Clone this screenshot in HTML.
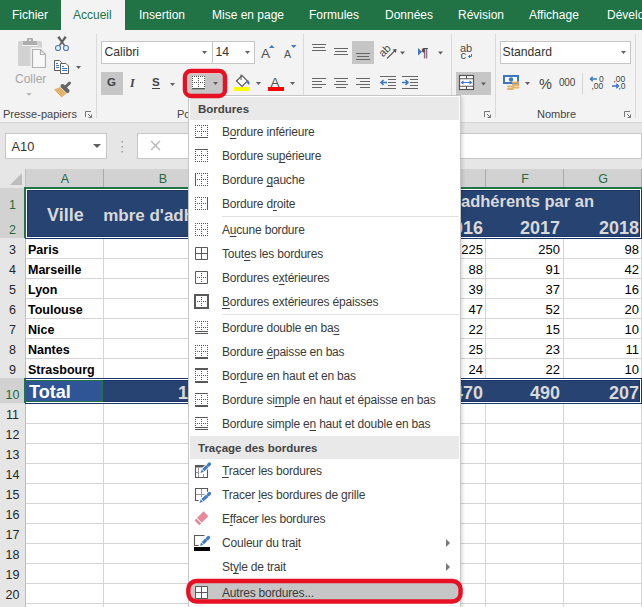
<!DOCTYPE html><html><head><meta charset="utf-8"><style>
*{margin:0;padding:0;box-sizing:border-box}
html,body{width:642px;height:607px;overflow:hidden;background:#fff}
body{position:relative;font-family:"Liberation Sans",sans-serif;color:#262626}
.a{position:absolute}
.t{position:absolute;white-space:nowrap;line-height:1}
.tab{position:absolute;top:8px;font-size:12px;color:#fff;white-space:nowrap;line-height:14px}
.sep{position:absolute;width:1px;background:#dadada}
.gl{position:absolute;font-size:11px;color:#444;white-space:nowrap;line-height:12px}
.dd{position:absolute;width:0;height:0;border-left:3px solid transparent;border-right:3px solid transparent;border-top:3px solid #5f5f5f}
.box{position:absolute;background:#fff;border:1px solid #c6c6c6}
.hl{position:absolute;height:1px;background:#d4d4d4}
.vl{position:absolute;width:1px;background:#d4d4d4}
.rh{position:absolute;left:0;width:25px;background:#e6e6e6;font-size:12.5px;color:#262626;text-align:center;white-space:nowrap}
.cell{position:absolute;font-size:12.5px;font-weight:bold;color:#000;white-space:nowrap;line-height:20px}
.num{position:absolute;font-size:13px;color:#000;white-space:nowrap;line-height:20px;text-align:right}
.mh{position:absolute;left:1px;width:269px;height:23px;background:#e9e9e9;font-size:11.5px;font-weight:bold;color:#444;line-height:25px;padding-left:8px;white-space:nowrap}
.mi{position:absolute;left:33px;font-size:12px;letter-spacing:-0.2px;color:#3b3b3b;line-height:24px;white-space:nowrap}
.mi u{text-decoration:underline;text-underline-offset:1.5px}
.ms{position:absolute;left:33px;width:237px;height:1px;background:#e1e1e1}
.ic{position:absolute;left:6px}
</style></head><body>
<div class="a" style="left:0;top:0;width:642px;height:30px;background:#217346"></div>
<div class="a" style="left:61px;top:0;width:64px;height:30px;background:#f3f3f3"></div>
<div class="tab" style="left:12px;color:#fff">Fichier</div>
<div class="tab" style="left:73px;color:#217346">Accueil</div>
<div class="tab" style="left:139px;color:#fff">Insertion</div>
<div class="tab" style="left:212px;color:#fff">Mise en page</div>
<div class="tab" style="left:309px;color:#fff">Formules</div>
<div class="tab" style="left:385px;color:#fff">Données</div>
<div class="tab" style="left:458px;color:#fff">Révision</div>
<div class="tab" style="left:529px;color:#fff">Affichage</div>
<div class="tab" style="left:607px;color:#fff">Développeur</div>
<div class="a" style="left:0;top:30px;width:642px;height:92px;background:#f3f3f3"></div>
<div class="a" style="left:0;top:122px;width:642px;height:47px;background:#e6e6e6"></div>
<div class="box" style="left:5px;top:133px;width:102px;height:26px"></div>
<div class="t" style="left:11.5px;top:140.5px;font-size:12.8px;color:#333">A10</div>
<div class="dd" style="left:93px;top:143.5px;border-left-width:4px;border-right-width:4px;border-top-width:4.5px"></div>
<div class="box" style="left:137px;top:133px;width:505px;height:26px"></div>
<div class="a" style="left:0;top:122px;width:642px;height:1px;background:#d5d5d5"></div>
<div class="a" style="left:0;top:169px;width:25px;height:19px;background:#e6e6e6"></div>
<div class="a" style="left:25px;top:169px;width:617px;height:19px;background:#d2d2d2"></div>
<div class="a" style="left:25px;top:169px;width:1px;height:18px;background:#bdbdbd"></div>
<div class="a" style="left:103px;top:169px;width:1px;height:18px;background:#ababab"></div>
<div class="a" style="left:485px;top:169px;width:1px;height:18px;background:#ababab"></div>
<div class="a" style="left:563px;top:169px;width:1px;height:18px;background:#ababab"></div>
<div class="a" style="left:641px;top:169px;width:1px;height:18px;background:#ababab"></div>
<div class="t" style="left:45px;width:40px;text-align:center;top:173px;font-size:12.5px;color:#1e6b40">A</div>
<div class="t" style="left:143px;width:40px;text-align:center;top:173px;font-size:12.5px;color:#1e6b40">B</div>
<div class="t" style="left:505px;width:40px;text-align:center;top:173px;font-size:12.5px;color:#1e6b40">F</div>
<div class="t" style="left:583px;width:40px;text-align:center;top:173px;font-size:12.5px;color:#1e6b40">G</div>
<div class="rh" style="top:188px;height:25px;background:#d2d2d2"></div>
<div class="a" style="left:0;top:213px;width:25px;height:1px;background:#bdbdbd"></div>
<div class="t" style="left:0;width:25px;text-align:center;top:199px;font-size:12.5px;color:#1e6b40">1</div>
<div class="rh" style="top:213px;height:25px;background:#d2d2d2"></div>
<div class="a" style="left:0;top:238px;width:25px;height:1px;background:#bdbdbd"></div>
<div class="t" style="left:0;width:25px;text-align:center;top:224px;font-size:12.5px;color:#1e6b40">2</div>
<div class="rh" style="top:238px;height:20px;background:#e6e6e6"></div>
<div class="a" style="left:0;top:258px;width:25px;height:1px;background:#bdbdbd"></div>
<div class="t" style="left:0;width:25px;text-align:center;top:244px;font-size:12.5px;color:#262626">3</div>
<div class="rh" style="top:258px;height:20px;background:#e6e6e6"></div>
<div class="a" style="left:0;top:278px;width:25px;height:1px;background:#bdbdbd"></div>
<div class="t" style="left:0;width:25px;text-align:center;top:264px;font-size:12.5px;color:#262626">4</div>
<div class="rh" style="top:278px;height:20px;background:#e6e6e6"></div>
<div class="a" style="left:0;top:298px;width:25px;height:1px;background:#bdbdbd"></div>
<div class="t" style="left:0;width:25px;text-align:center;top:284px;font-size:12.5px;color:#262626">5</div>
<div class="rh" style="top:298px;height:20px;background:#e6e6e6"></div>
<div class="a" style="left:0;top:318px;width:25px;height:1px;background:#bdbdbd"></div>
<div class="t" style="left:0;width:25px;text-align:center;top:304px;font-size:12.5px;color:#262626">6</div>
<div class="rh" style="top:318px;height:20px;background:#e6e6e6"></div>
<div class="a" style="left:0;top:338px;width:25px;height:1px;background:#bdbdbd"></div>
<div class="t" style="left:0;width:25px;text-align:center;top:324px;font-size:12.5px;color:#262626">7</div>
<div class="rh" style="top:338px;height:20px;background:#e6e6e6"></div>
<div class="a" style="left:0;top:358px;width:25px;height:1px;background:#bdbdbd"></div>
<div class="t" style="left:0;width:25px;text-align:center;top:344px;font-size:12.5px;color:#262626">8</div>
<div class="rh" style="top:358px;height:20px;background:#e6e6e6"></div>
<div class="a" style="left:0;top:378px;width:25px;height:1px;background:#bdbdbd"></div>
<div class="t" style="left:0;width:25px;text-align:center;top:364px;font-size:12.5px;color:#262626">9</div>
<div class="rh" style="top:378px;height:25px;background:#d2d2d2"></div>
<div class="a" style="left:0;top:403px;width:25px;height:1px;background:#bdbdbd"></div>
<div class="t" style="left:0;width:25px;text-align:center;top:389px;font-size:12.5px;color:#1e6b40">10</div>
<div class="rh" style="top:403px;height:20px;background:#e6e6e6"></div>
<div class="a" style="left:0;top:423px;width:25px;height:1px;background:#bdbdbd"></div>
<div class="t" style="left:0;width:25px;text-align:center;top:409px;font-size:12.5px;color:#262626">11</div>
<div class="rh" style="top:423px;height:20px;background:#e6e6e6"></div>
<div class="a" style="left:0;top:443px;width:25px;height:1px;background:#bdbdbd"></div>
<div class="t" style="left:0;width:25px;text-align:center;top:429px;font-size:12.5px;color:#262626">12</div>
<div class="rh" style="top:443px;height:20px;background:#e6e6e6"></div>
<div class="a" style="left:0;top:463px;width:25px;height:1px;background:#bdbdbd"></div>
<div class="t" style="left:0;width:25px;text-align:center;top:449px;font-size:12.5px;color:#262626">13</div>
<div class="rh" style="top:463px;height:20px;background:#e6e6e6"></div>
<div class="a" style="left:0;top:483px;width:25px;height:1px;background:#bdbdbd"></div>
<div class="t" style="left:0;width:25px;text-align:center;top:469px;font-size:12.5px;color:#262626">14</div>
<div class="rh" style="top:483px;height:20px;background:#e6e6e6"></div>
<div class="a" style="left:0;top:503px;width:25px;height:1px;background:#bdbdbd"></div>
<div class="t" style="left:0;width:25px;text-align:center;top:489px;font-size:12.5px;color:#262626">15</div>
<div class="rh" style="top:503px;height:20px;background:#e6e6e6"></div>
<div class="a" style="left:0;top:523px;width:25px;height:1px;background:#bdbdbd"></div>
<div class="t" style="left:0;width:25px;text-align:center;top:509px;font-size:12.5px;color:#262626">16</div>
<div class="rh" style="top:523px;height:20px;background:#e6e6e6"></div>
<div class="a" style="left:0;top:543px;width:25px;height:1px;background:#bdbdbd"></div>
<div class="t" style="left:0;width:25px;text-align:center;top:529px;font-size:12.5px;color:#262626">17</div>
<div class="rh" style="top:543px;height:20px;background:#e6e6e6"></div>
<div class="a" style="left:0;top:563px;width:25px;height:1px;background:#bdbdbd"></div>
<div class="t" style="left:0;width:25px;text-align:center;top:549px;font-size:12.5px;color:#262626">18</div>
<div class="rh" style="top:563px;height:20px;background:#e6e6e6"></div>
<div class="a" style="left:0;top:583px;width:25px;height:1px;background:#bdbdbd"></div>
<div class="t" style="left:0;width:25px;text-align:center;top:569px;font-size:12.5px;color:#262626">19</div>
<div class="rh" style="top:583px;height:20px;background:#e6e6e6"></div>
<div class="a" style="left:0;top:603px;width:25px;height:1px;background:#bdbdbd"></div>
<div class="t" style="left:0;width:25px;text-align:center;top:589px;font-size:12.5px;color:#262626">20</div>
<div class="rh" style="top:603px;height:20px;background:#e6e6e6"></div>
<div class="a" style="left:0;top:623px;width:25px;height:1px;background:#bdbdbd"></div>
<div class="t" style="left:0;width:25px;text-align:center;top:609px;font-size:12.5px;color:#262626">21</div>
<div class="a" style="left:25px;top:188px;width:1px;height:419px;background:#bdbdbd"></div>
<svg class="a" style="left:0;top:169px" width="25" height="19"><polygon points="10,16 22,16 22,4" fill="#bdbdbd"/></svg>
<div class="hl" style="left:26px;top:213px;width:616px"></div>
<div class="hl" style="left:26px;top:238px;width:616px"></div>
<div class="hl" style="left:26px;top:258px;width:616px"></div>
<div class="hl" style="left:26px;top:278px;width:616px"></div>
<div class="hl" style="left:26px;top:298px;width:616px"></div>
<div class="hl" style="left:26px;top:318px;width:616px"></div>
<div class="hl" style="left:26px;top:338px;width:616px"></div>
<div class="hl" style="left:26px;top:358px;width:616px"></div>
<div class="hl" style="left:26px;top:378px;width:616px"></div>
<div class="hl" style="left:26px;top:403px;width:616px"></div>
<div class="hl" style="left:26px;top:423px;width:616px"></div>
<div class="hl" style="left:26px;top:443px;width:616px"></div>
<div class="hl" style="left:26px;top:463px;width:616px"></div>
<div class="hl" style="left:26px;top:483px;width:616px"></div>
<div class="hl" style="left:26px;top:503px;width:616px"></div>
<div class="hl" style="left:26px;top:523px;width:616px"></div>
<div class="hl" style="left:26px;top:543px;width:616px"></div>
<div class="hl" style="left:26px;top:563px;width:616px"></div>
<div class="hl" style="left:26px;top:583px;width:616px"></div>
<div class="hl" style="left:26px;top:603px;width:616px"></div>
<div class="hl" style="left:26px;top:623px;width:616px"></div>
<div class="vl" style="left:103px;top:188px;height:419px"></div>
<div class="vl" style="left:485px;top:188px;height:419px"></div>
<div class="vl" style="left:563px;top:188px;height:419px"></div>
<div class="vl" style="left:641px;top:188px;height:419px"></div>
<div class="a" style="left:25px;top:188px;width:617px;height:51px;background:#1c3468"></div>
<div class="a" style="left:26px;top:189px;width:615px;height:49px;background:#fff"></div>
<div class="a" style="left:27px;top:190px;width:613px;height:47px;background:#1c3468"></div>
<div class="a" style="left:28px;top:191px;width:611px;height:45px;background:#264372"></div>
<div class="t" style="left:47px;top:206px;font-size:18px;font-weight:bold;color:#d9d9d9">Ville</div>
<div class="a" style="left:103px;top:190px;width:85px;height:46px;overflow:hidden"><div class="t" style="left:-22.5px;top:16.5px;font-size:17px;font-weight:bold;color:#d9d9d9">Nombre d'adhérents</div></div>
<div class="t" style="left:461px;top:193px;font-size:16.5px;font-weight:bold;color:#d9d9d9">adhérents par an</div>
<div class="t" style="left:423px;width:60px;text-align:right;top:219px;font-size:18px;font-weight:bold;color:#d9d9d9">2016</div>
<div class="t" style="left:500px;width:60px;text-align:right;top:219px;font-size:18px;font-weight:bold;color:#d9d9d9">2017</div>
<div class="t" style="left:579px;width:60px;text-align:right;top:219px;font-size:18px;font-weight:bold;color:#d9d9d9">2018</div>
<div class="cell" style="left:28px;top:240px">Paris</div>
<div class="num" style="left:423px;width:60px;top:240px">225</div>
<div class="num" style="left:500px;width:60px;top:240px">250</div>
<div class="num" style="left:579px;width:60px;top:240px">98</div>
<div class="cell" style="left:28px;top:260px">Marseille</div>
<div class="num" style="left:423px;width:60px;top:260px">88</div>
<div class="num" style="left:500px;width:60px;top:260px">91</div>
<div class="num" style="left:579px;width:60px;top:260px">42</div>
<div class="cell" style="left:28px;top:280px">Lyon</div>
<div class="num" style="left:423px;width:60px;top:280px">39</div>
<div class="num" style="left:500px;width:60px;top:280px">37</div>
<div class="num" style="left:579px;width:60px;top:280px">16</div>
<div class="cell" style="left:28px;top:300px">Toulouse</div>
<div class="num" style="left:423px;width:60px;top:300px">47</div>
<div class="num" style="left:500px;width:60px;top:300px">52</div>
<div class="num" style="left:579px;width:60px;top:300px">20</div>
<div class="cell" style="left:28px;top:320px">Nice</div>
<div class="num" style="left:423px;width:60px;top:320px">22</div>
<div class="num" style="left:500px;width:60px;top:320px">15</div>
<div class="num" style="left:579px;width:60px;top:320px">10</div>
<div class="cell" style="left:28px;top:340px">Nantes</div>
<div class="num" style="left:423px;width:60px;top:340px">25</div>
<div class="num" style="left:500px;width:60px;top:340px">23</div>
<div class="num" style="left:579px;width:60px;top:340px">11</div>
<div class="cell" style="left:28px;top:360px">Strasbourg</div>
<div class="num" style="left:423px;width:60px;top:360px">24</div>
<div class="num" style="left:500px;width:60px;top:360px">22</div>
<div class="num" style="left:579px;width:60px;top:360px">10</div>
<div class="a" style="left:25px;top:378px;width:617px;height:26px;background:#1c3468"></div>
<div class="a" style="left:26px;top:379px;width:615px;height:24px;background:#fff"></div>
<div class="a" style="left:27px;top:380px;width:613px;height:22px;background:#1c3468"></div>
<div class="a" style="left:28px;top:381px;width:611px;height:20px;background:#264372"></div>
<div class="a" style="left:26px;top:380px;width:77px;height:22px;background:#2f5597;border:solid #217346;border-width:1px 2px 1px 0"></div>
<div class="a" style="left:24px;top:187px;width:618px;height:2px;background:#217346"></div>
<div class="a" style="left:24px;top:187px;width:2px;height:51px;background:#217346"></div>
<div class="a" style="left:24px;top:378px;width:2px;height:25px;background:#217346"></div>
<div class="t" style="left:29px;top:383px;font-size:18px;font-weight:bold;color:#fff">Total</div>
<div class="t" style="left:423px;width:60px;text-align:right;top:384px;font-size:18px;font-weight:bold;color:#d9d9d9">470</div>
<div class="t" style="left:500px;width:60px;text-align:right;top:384px;font-size:18px;font-weight:bold;color:#d9d9d9">490</div>
<div class="t" style="left:579px;width:60px;text-align:right;top:384px;font-size:18px;font-weight:bold;color:#d9d9d9">207</div>
<div class="t" style="left:128px;width:60px;text-align:right;top:384px;font-size:18px;font-weight:bold;color:#d9d9d9">1</div>
<div class="gl" style="left:3px;top:108px">Presse-papiers</div>
<div class="gl" style="left:537px;top:108px">Nombre</div>
<div class="gl" style="left:177px;top:108px">Police</div>
<div class="t" style="left:15px;top:73px;font-size:12px;color:#a6a6a6">Coller</div>
<div class="box" style="left:101px;top:41px;width:112px;height:23px"></div>
<div class="t" style="left:104.5px;top:46px;font-size:12.2px;color:#333">Calibri</div>
<div class="box" style="left:212px;top:41px;width:43px;height:23px"></div>
<div class="t" style="left:215.5px;top:46px;font-size:12.2px;color:#333">14</div>
<div class="box" style="left:500px;top:41px;width:131px;height:23px"></div>
<div class="t" style="left:502.5px;top:46px;font-size:12.2px;color:#333">Standard</div>
<div class="sep" style="left:96px;top:34px;height:84px"></div>
<div class="sep" style="left:303px;top:34px;height:84px"></div>
<div class="sep" style="left:451px;top:34px;height:84px"></div>
<div class="sep" style="left:495px;top:34px;height:84px"></div>
<div class="sep" style="left:635px;top:34px;height:84px"></div>
<div class="a" style="left:101px;top:72px;width:22px;height:23px;background:#c6c6c6"></div>
<div class="a" style="left:188px;top:74px;width:35px;height:20px;background:#c6c6c6"></div>
<div class="a" style="left:352px;top:41px;width:22px;height:23px;background:#c6c6c6"></div>
<div class="a" style="left:456px;top:72px;width:35px;height:23px;background:#c6c6c6"></div>
<div class="t" style="left:107px;top:77px;font-size:11.5px;font-weight:bold;color:#444">G</div>
<div class="t" style="left:130px;top:77px;font-size:12px;font-weight:bold;font-style:italic;color:#444;font-family:'Liberation Serif'">I</div>
<div class="t" style="left:152px;top:77px;font-size:11.5px;font-weight:bold;color:#444">S</div>
<div class="a" style="left:152px;top:88px;width:8px;height:1px;background:#444"></div>
<div class="t" style="left:539px;top:77px;font-size:14.5px;color:#444">%</div>
<div class="t" style="left:559px;top:77.5px;font-size:10px;color:#444;letter-spacing:-0.2px">000</div>
<svg class="a" style="left:0;top:0" width="642" height="170"><polygon points="202,51 207,51 204.5,54" fill="#5f5f5f"/><polygon points="245,51 250,51 247.5,54" fill="#5f5f5f"/><polygon points="621,51 626,51 623.5,54" fill="#5f5f5f"/><polygon points="76,66 81,66 78.5,69" fill="#5f5f5f"/><polygon points="170,83 175,83 172.5,86" fill="#5f5f5f"/><polygon points="213,82 218,82 215.5,85" fill="#5f5f5f"/><polygon points="256,82 261,82 258.5,85" fill="#5f5f5f"/><polygon points="290,82 295,82 292.5,85" fill="#5f5f5f"/><polygon points="400,51.5 405,51.5 402.5,54.5" fill="#5f5f5f"/><polygon points="438,51.5 443,51.5 440.5,54.5" fill="#5f5f5f"/><polygon points="481,82.5 486,82.5 483.5,85.5" fill="#5f5f5f"/><polygon points="525,82 530,82 527.5,85" fill="#5f5f5f"/><polygon points="26.5,93 31.5,93 29.0,96" fill="#b5b5b5"/><rect x="18" y="41" width="24" height="25" rx="1.5" fill="#d2d2d2"/><rect x="23" y="41" width="14" height="4" fill="#adadad"/><rect x="27" y="38" width="6" height="4" rx="1" fill="#adadad"/><rect x="29" y="39.5" width="2" height="1.5" fill="#f3f3f3"/><rect x="22" y="45" width="16" height="1" fill="#f3f3f3"/><path d="M31.5 48.5 H40.5 L45.5 53.5 V67.5 H31.5 Z" fill="#f8f8f8" stroke="#f3f3f3" stroke-width="2"/><path d="M32.5 49.5 H40.5 L45.5 54.5 V67.5 H32.5 Z" fill="#f8f8f8" stroke="#b0b0b0" stroke-width="1.2"/><path d="M40.5 49.5 V54.5 H45.5" fill="none" stroke="#b0b0b0" stroke-width="1.2"/><path d="M57.25 37.56 L59.35 36.04 L65.37 45.39 L64.23 46.21 Z" fill="#5f5f5f"/><path d="M66.75 37.56 L64.65 36.04 L58.63 45.39 L59.77 46.21 Z" fill="#5f5f5f"/><circle cx="58" cy="48" r="2.5" fill="#f3f3f3" stroke="#4a7ebb" stroke-width="1.15"/><circle cx="66" cy="48" r="2.5" fill="#f3f3f3" stroke="#4a7ebb" stroke-width="1.15"/><path d="M54.5 60.5 H59.5 L61.5 62.5 V70.5 H54.5 Z" fill="#fff" stroke="#5f5f5f" stroke-width="1"/><path d="M56 63.5 H58 M56 65.5 H59 M56 67.5 H59" stroke="#3a78c2" stroke-width="1"/><path d="M60.5 63.5 H66 L68.5 66 V73.5 H60.5 Z" fill="#fff" stroke="#5f5f5f" stroke-width="1"/><path d="M62 66.5 H64 M62 68.5 H67 M62 70.5 H67" stroke="#3a78c2" stroke-width="1"/><path d="M54 89.5 L60 87 L66.5 93.5 L61.5 97.5 Z" fill="#e2b369"/><path d="M60.5 87 L66.5 93" stroke="#f3f3f3" stroke-width="1"/><path d="M62.5 86 L67.5 91" stroke="#666" stroke-width="4" stroke-linecap="round"/><path d="M66 86.5 L69.5 83" stroke="#666" stroke-width="3" stroke-linecap="round"/><text x="261" y="58" font-family="Liberation Sans" font-size="13.5" fill="#505050">A</text><polygon points="269,48 274.5,48 271.75,45" fill="#3a78c2"/><text x="284" y="58" font-family="Liberation Sans" font-size="10.5" fill="#505050">A</text><polygon points="291,45 296.5,45 293.75,48" fill="#3a78c2"/><rect x="192" y="76" width="13" height="12" fill="#fff"/><rect x="192" y="76" width="1" height="1" fill="#555"/><rect x="192" y="78" width="1" height="1" fill="#555"/><rect x="192" y="80" width="1" height="1" fill="#555"/><rect x="192" y="82" width="1" height="1" fill="#555"/><rect x="192" y="84" width="1" height="1" fill="#555"/><rect x="192" y="86" width="1" height="1" fill="#555"/><rect x="192" y="88" width="1" height="1" fill="#555"/><rect x="194" y="76" width="1" height="1" fill="#555"/><rect x="194" y="82" width="1" height="1" fill="#555"/><rect x="194" y="88" width="1" height="1" fill="#555"/><rect x="196" y="76" width="1" height="1" fill="#555"/><rect x="196" y="82" width="1" height="1" fill="#555"/><rect x="196" y="88" width="1" height="1" fill="#555"/><rect x="198" y="76" width="1" height="1" fill="#555"/><rect x="198" y="78" width="1" height="1" fill="#555"/><rect x="198" y="80" width="1" height="1" fill="#555"/><rect x="198" y="82" width="1" height="1" fill="#555"/><rect x="198" y="84" width="1" height="1" fill="#555"/><rect x="198" y="86" width="1" height="1" fill="#555"/><rect x="198" y="88" width="1" height="1" fill="#555"/><rect x="200" y="76" width="1" height="1" fill="#555"/><rect x="200" y="82" width="1" height="1" fill="#555"/><rect x="200" y="88" width="1" height="1" fill="#555"/><rect x="202" y="76" width="1" height="1" fill="#555"/><rect x="202" y="82" width="1" height="1" fill="#555"/><rect x="202" y="88" width="1" height="1" fill="#555"/><rect x="204" y="76" width="1" height="1" fill="#555"/><rect x="204" y="78" width="1" height="1" fill="#555"/><rect x="204" y="80" width="1" height="1" fill="#555"/><rect x="204" y="82" width="1" height="1" fill="#555"/><rect x="204" y="84" width="1" height="1" fill="#555"/><rect x="204" y="86" width="1" height="1" fill="#555"/><rect x="204" y="88" width="1" height="1" fill="#555"/><rect x="192" y="88" width="13" height="1.3" fill="#555"/><path d="M236.5 81 L242 75.5 L247.5 81 L242 86.5 Z" fill="#fff" stroke="#555" stroke-width="1.1"/><path d="M241 74.5 V80" stroke="#555" stroke-width="1"/><path d="M247.5 80 Q250.5 82 249 85 L247 83 Z" fill="#3a78c2"/><rect x="234" y="87" width="16" height="4" fill="#ffff00"/><text x="270.5" y="86.8" font-family="Liberation Sans" font-size="13.5" fill="#555">A</text><rect x="268" y="87" width="16" height="4" fill="#ff0000"/><rect x="312" y="44" width="14" height="1" fill="#666"/><rect x="312" y="50" width="14" height="1" fill="#666"/><rect x="313" y="47" width="12" height="1" fill="#666"/><rect x="334" y="48" width="14" height="1" fill="#666"/><rect x="334" y="54" width="14" height="1" fill="#666"/><rect x="335" y="51" width="12" height="1" fill="#666"/><rect x="356" y="53" width="14" height="1" fill="#666"/><rect x="356" y="59" width="14" height="1" fill="#666"/><rect x="357" y="56" width="12" height="1" fill="#666"/><rect x="312" y="78" width="14" height="1" fill="#666"/><rect x="312" y="84" width="14" height="1" fill="#666"/><rect x="312" y="81" width="10" height="1" fill="#666"/><rect x="312" y="87" width="10" height="1" fill="#666"/><rect x="334" y="78" width="14" height="1" fill="#666"/><rect x="334" y="84" width="14" height="1" fill="#666"/><rect x="336" y="81" width="10" height="1" fill="#666"/><rect x="336" y="87" width="10" height="1" fill="#666"/><rect x="356" y="78" width="14" height="1" fill="#666"/><rect x="356" y="84" width="14" height="1" fill="#666"/><rect x="360" y="81" width="10" height="1" fill="#666"/><rect x="360" y="87" width="10" height="1" fill="#666"/><rect x="380" y="76" width="16" height="1" fill="#666"/><rect x="380" y="88" width="16" height="1" fill="#666"/><rect x="388" y="79" width="8" height="1" fill="#666"/><rect x="388" y="82" width="8" height="1" fill="#666"/><rect x="388" y="85" width="8" height="1" fill="#666"/><rect x="402" y="76" width="16" height="1" fill="#666"/><rect x="402" y="88" width="16" height="1" fill="#666"/><rect x="410" y="79" width="8" height="1" fill="#666"/><rect x="410" y="82" width="8" height="1" fill="#666"/><rect x="410" y="85" width="8" height="1" fill="#666"/><path d="M381 82.5 H387 M383.5 80 L381 82.5 L383.5 85" stroke="#3a78c2" stroke-width="1.6" fill="none"/><path d="M402 82.5 H408 M405.5 80 L408 82.5 L405.5 85" stroke="#3a78c2" stroke-width="1.6" fill="none"/><text x="0" y="0" font-family="Liberation Sans" font-size="11" fill="#4a4a4a" transform="translate(383 57.5) rotate(-45)">ab</text><path d="M387 58.5 L395.5 50" stroke="#555" stroke-width="1.1"/><polygon points="396.5,49 392.5,49.5 396,53" fill="#555"/><polygon points="418,48 422,51.75 418,55.5" fill="#3a78c2"/><text x="421.5" y="56.5" font-family="Liberation Sans" font-size="12" font-weight="bold" fill="#4a4a4a">¶</text><text x="460" y="51.8" font-family="Liberation Sans" font-size="11" fill="#4a4a4a">ab</text><text x="460.5" y="59" font-family="Liberation Sans" font-size="11" fill="#4a4a4a">c</text><path d="M471.5 54 V56.5 H468.5 M470 55 L468.5 56.5 L470 58" stroke="#3a78c2" stroke-width="1" fill="none"/><rect x="459.5" y="75.5" width="14" height="14" fill="#fff" stroke="#555" stroke-width="1.2"/><path d="M459.5 78.7 H473.5 M459.5 86.3 H473.5 M466.5 75.5 V78.7 M466.5 86.3 V89.5" stroke="#555" stroke-width="1.1"/><path d="M461.5 82.5 H471.5 M463.5 80.8 L461.5 82.5 L463.5 84.2 M469.5 80.8 L471.5 82.5 L469.5 84.2" stroke="#3a78c2" stroke-width="1.1" fill="none"/><rect x="504" y="76" width="14" height="7" fill="#fff" stroke="#3a78c2" stroke-width="2"/><circle cx="511" cy="79.5" r="2.2" fill="#3a78c2"/><rect x="512" y="81.5" width="7.5" height="2" rx="1" fill="#e2b369"/><rect x="512" y="84" width="7.5" height="2" rx="1" fill="#e2b369"/><rect x="512" y="86.5" width="7.5" height="2" rx="1" fill="#e2b369"/><rect x="507" y="85.5" width="7" height="2" rx="1" fill="#e2b369"/><rect x="507" y="88" width="7" height="2" rx="1" fill="#e2b369"/><rect x="582" y="73" width="1" height="21" fill="#d5d5d5"/><text x="599" y="81.8" font-family="Liberation Sans" font-size="8.5" fill="#444">0</text><text x="591.5" y="89.2" font-family="Liberation Sans" font-size="8.5" fill="#444">,00</text><path d="M590.5 79 H597 M592.7 76.8 L590.5 79 L592.7 81.2" stroke="#3a78c2" stroke-width="1.4" fill="none"/><text x="613.5" y="81.8" font-family="Liberation Sans" font-size="8.5" fill="#444">,00</text><text x="618.5" y="89.2" font-family="Liberation Sans" font-size="8.5" fill="#444">,0</text><path d="M612 86 H618.5 M616.3 83.8 L618.5 86 L616.3 88.2" stroke="#3a78c2" stroke-width="1.4" fill="none"/><path d="M85.5 117 V111.5 H91" stroke="#777" stroke-width="1" fill="none"/><path d="M88 114 L91.5 117.5 M91.5 114.5 V117.5 H88.5" stroke="#777" stroke-width="1" fill="none"/><path d="M484.5 117 V111.5 H490" stroke="#777" stroke-width="1" fill="none"/><path d="M487 114 L490.5 117.5 M490.5 114.5 V117.5 H487.5" stroke="#777" stroke-width="1" fill="none"/><path d="M624.5 117 V111.5 H630" stroke="#777" stroke-width="1" fill="none"/><path d="M627 114 L630.5 117.5 M630.5 114.5 V117.5 H627.5" stroke="#777" stroke-width="1" fill="none"/><rect x="121.5" y="141" width="1.5" height="1.5" fill="#9a9a9a"/><rect x="121.5" y="146" width="1.5" height="1.5" fill="#9a9a9a"/><rect x="121.5" y="151" width="1.5" height="1.5" fill="#9a9a9a"/><path d="M151 141 L160 150 M160 141 L151 150" stroke="#b5b5b5" stroke-width="1.3"/></svg>
<div class="a" style="left:188px;top:95px;width:273px;height:520px;background:#fff;border:1px solid #c6c6c6;box-shadow:2px 2px 3px rgba(0,0,0,0.12)"></div>
<div class="mh" style="left:190px;top:97px">Bordures</div>
<div class="mi" style="left:222px;top:120px">B<u>o</u>rdure inférieure</div>
<div class="mi" style="left:222px;top:144px">Bordure su<u>p</u>érieure</div>
<div class="mi" style="left:222px;top:168px">Bordure <u>g</u>auche</div>
<div class="mi" style="left:222px;top:192px">Bordure d<u>r</u>oite</div>
<div class="mi" style="left:222px;top:218px">A<u>u</u>cune bordure</div>
<div class="mi" style="left:222px;top:242px">Tout<u>e</u>s les bordures</div>
<div class="mi" style="left:222px;top:266px">Bordures e<u>x</u>térieures</div>
<div class="mi" style="left:222px;top:290px"><u>B</u>ordures extérieures épaisses</div>
<div class="mi" style="left:222px;top:316px">Bordure double en ba<u>s</u></div>
<div class="mi" style="left:222px;top:340px">Bordure <u>é</u>paisse en bas</div>
<div class="mi" style="left:222px;top:364px">Bor<u>d</u>ure en haut et en bas</div>
<div class="mi" style="left:222px;top:388px">Bordure si<u>m</u>ple en haut et épaisse en bas</div>
<div class="mi" style="left:222px;top:412px">Bordure simple e<u>n</u> haut et double en bas</div>
<div class="ms" style="left:222px;top:216px"></div>
<div class="ms" style="left:222px;top:314px"></div>
<div class="mh" style="left:190px;top:436px">Traçage des bordures</div>
<div class="a" style="left:191px;top:583px;width:267px;height:18px;background:#c6c6c6"></div>
<div class="mi" style="left:222px;top:459px"><u>T</u>racer les bordures</div>
<div class="mi" style="left:222px;top:483px">Tracer <u>l</u>es bordures de grille</div>
<div class="mi" style="left:222px;top:507px">E<u>f</u>facer les bordures</div>
<div class="mi" style="left:222px;top:531px">Couleur du tra<u>i</u>t</div>
<div class="mi" style="left:222px;top:555px">St<u>y</u>le de trait</div>
<div class="mi" style="left:222px;top:581px"><u>A</u>utres bordures...</div>
<svg class="a" style="left:445px;top:538px" width="6" height="10"><polygon points="1,1 5,5 1,9" fill="#777"/></svg>
<svg class="a" style="left:445px;top:562px" width="6" height="10"><polygon points="1,1 5,5 1,9" fill="#777"/></svg>
<svg class="a" style="left:0;top:0" width="642" height="607"><rect x="195" y="125" width="1" height="1" fill="#595959"/><rect x="195" y="127" width="1" height="1" fill="#595959"/><rect x="195" y="129" width="1" height="1" fill="#595959"/><rect x="195" y="131" width="1" height="1" fill="#595959"/><rect x="195" y="133" width="1" height="1" fill="#595959"/><rect x="195" y="135" width="1" height="1" fill="#595959"/><rect x="197" y="125" width="1" height="1" fill="#595959"/><rect x="197" y="131" width="1" height="1" fill="#595959"/><rect x="199" y="125" width="1" height="1" fill="#595959"/><rect x="199" y="131" width="1" height="1" fill="#595959"/><rect x="201" y="125" width="1" height="1" fill="#595959"/><rect x="201" y="127" width="1" height="1" fill="#595959"/><rect x="201" y="129" width="1" height="1" fill="#595959"/><rect x="201" y="131" width="1" height="1" fill="#595959"/><rect x="201" y="133" width="1" height="1" fill="#595959"/><rect x="201" y="135" width="1" height="1" fill="#595959"/><rect x="203" y="125" width="1" height="1" fill="#595959"/><rect x="203" y="131" width="1" height="1" fill="#595959"/><rect x="205" y="125" width="1" height="1" fill="#595959"/><rect x="205" y="131" width="1" height="1" fill="#595959"/><rect x="207" y="125" width="1" height="1" fill="#595959"/><rect x="207" y="127" width="1" height="1" fill="#595959"/><rect x="207" y="129" width="1" height="1" fill="#595959"/><rect x="207" y="131" width="1" height="1" fill="#595959"/><rect x="207" y="133" width="1" height="1" fill="#595959"/><rect x="207" y="135" width="1" height="1" fill="#595959"/><rect x="195" y="137" width="13" height="1" fill="#595959"/><rect x="195" y="151" width="1" height="1" fill="#595959"/><rect x="195" y="153" width="1" height="1" fill="#595959"/><rect x="195" y="155" width="1" height="1" fill="#595959"/><rect x="195" y="157" width="1" height="1" fill="#595959"/><rect x="195" y="159" width="1" height="1" fill="#595959"/><rect x="195" y="161" width="1" height="1" fill="#595959"/><rect x="197" y="155" width="1" height="1" fill="#595959"/><rect x="197" y="161" width="1" height="1" fill="#595959"/><rect x="199" y="155" width="1" height="1" fill="#595959"/><rect x="199" y="161" width="1" height="1" fill="#595959"/><rect x="201" y="151" width="1" height="1" fill="#595959"/><rect x="201" y="153" width="1" height="1" fill="#595959"/><rect x="201" y="155" width="1" height="1" fill="#595959"/><rect x="201" y="157" width="1" height="1" fill="#595959"/><rect x="201" y="159" width="1" height="1" fill="#595959"/><rect x="201" y="161" width="1" height="1" fill="#595959"/><rect x="203" y="155" width="1" height="1" fill="#595959"/><rect x="203" y="161" width="1" height="1" fill="#595959"/><rect x="205" y="155" width="1" height="1" fill="#595959"/><rect x="205" y="161" width="1" height="1" fill="#595959"/><rect x="207" y="151" width="1" height="1" fill="#595959"/><rect x="207" y="153" width="1" height="1" fill="#595959"/><rect x="207" y="155" width="1" height="1" fill="#595959"/><rect x="207" y="157" width="1" height="1" fill="#595959"/><rect x="207" y="159" width="1" height="1" fill="#595959"/><rect x="207" y="161" width="1" height="1" fill="#595959"/><rect x="195" y="149" width="13" height="1" fill="#595959"/><rect x="197" y="173" width="1" height="1" fill="#595959"/><rect x="197" y="179" width="1" height="1" fill="#595959"/><rect x="197" y="185" width="1" height="1" fill="#595959"/><rect x="199" y="173" width="1" height="1" fill="#595959"/><rect x="199" y="179" width="1" height="1" fill="#595959"/><rect x="199" y="185" width="1" height="1" fill="#595959"/><rect x="201" y="173" width="1" height="1" fill="#595959"/><rect x="201" y="175" width="1" height="1" fill="#595959"/><rect x="201" y="177" width="1" height="1" fill="#595959"/><rect x="201" y="179" width="1" height="1" fill="#595959"/><rect x="201" y="181" width="1" height="1" fill="#595959"/><rect x="201" y="183" width="1" height="1" fill="#595959"/><rect x="201" y="185" width="1" height="1" fill="#595959"/><rect x="203" y="173" width="1" height="1" fill="#595959"/><rect x="203" y="179" width="1" height="1" fill="#595959"/><rect x="203" y="185" width="1" height="1" fill="#595959"/><rect x="205" y="173" width="1" height="1" fill="#595959"/><rect x="205" y="179" width="1" height="1" fill="#595959"/><rect x="205" y="185" width="1" height="1" fill="#595959"/><rect x="207" y="173" width="1" height="1" fill="#595959"/><rect x="207" y="175" width="1" height="1" fill="#595959"/><rect x="207" y="177" width="1" height="1" fill="#595959"/><rect x="207" y="179" width="1" height="1" fill="#595959"/><rect x="207" y="181" width="1" height="1" fill="#595959"/><rect x="207" y="183" width="1" height="1" fill="#595959"/><rect x="207" y="185" width="1" height="1" fill="#595959"/><rect x="195" y="173" width="1" height="13" fill="#595959"/><rect x="195" y="197" width="1" height="1" fill="#595959"/><rect x="195" y="199" width="1" height="1" fill="#595959"/><rect x="195" y="201" width="1" height="1" fill="#595959"/><rect x="195" y="203" width="1" height="1" fill="#595959"/><rect x="195" y="205" width="1" height="1" fill="#595959"/><rect x="195" y="207" width="1" height="1" fill="#595959"/><rect x="195" y="209" width="1" height="1" fill="#595959"/><rect x="197" y="197" width="1" height="1" fill="#595959"/><rect x="197" y="203" width="1" height="1" fill="#595959"/><rect x="197" y="209" width="1" height="1" fill="#595959"/><rect x="199" y="197" width="1" height="1" fill="#595959"/><rect x="199" y="203" width="1" height="1" fill="#595959"/><rect x="199" y="209" width="1" height="1" fill="#595959"/><rect x="201" y="197" width="1" height="1" fill="#595959"/><rect x="201" y="199" width="1" height="1" fill="#595959"/><rect x="201" y="201" width="1" height="1" fill="#595959"/><rect x="201" y="203" width="1" height="1" fill="#595959"/><rect x="201" y="205" width="1" height="1" fill="#595959"/><rect x="201" y="207" width="1" height="1" fill="#595959"/><rect x="201" y="209" width="1" height="1" fill="#595959"/><rect x="203" y="197" width="1" height="1" fill="#595959"/><rect x="203" y="203" width="1" height="1" fill="#595959"/><rect x="203" y="209" width="1" height="1" fill="#595959"/><rect x="205" y="197" width="1" height="1" fill="#595959"/><rect x="205" y="203" width="1" height="1" fill="#595959"/><rect x="205" y="209" width="1" height="1" fill="#595959"/><rect x="207" y="197" width="1" height="13" fill="#595959"/><rect x="195" y="223" width="1" height="1" fill="#595959"/><rect x="195" y="225" width="1" height="1" fill="#595959"/><rect x="195" y="227" width="1" height="1" fill="#595959"/><rect x="195" y="229" width="1" height="1" fill="#595959"/><rect x="195" y="231" width="1" height="1" fill="#595959"/><rect x="195" y="233" width="1" height="1" fill="#595959"/><rect x="195" y="235" width="1" height="1" fill="#595959"/><rect x="197" y="223" width="1" height="1" fill="#595959"/><rect x="197" y="229" width="1" height="1" fill="#595959"/><rect x="197" y="235" width="1" height="1" fill="#595959"/><rect x="199" y="223" width="1" height="1" fill="#595959"/><rect x="199" y="229" width="1" height="1" fill="#595959"/><rect x="199" y="235" width="1" height="1" fill="#595959"/><rect x="201" y="223" width="1" height="1" fill="#595959"/><rect x="201" y="225" width="1" height="1" fill="#595959"/><rect x="201" y="227" width="1" height="1" fill="#595959"/><rect x="201" y="229" width="1" height="1" fill="#595959"/><rect x="201" y="231" width="1" height="1" fill="#595959"/><rect x="201" y="233" width="1" height="1" fill="#595959"/><rect x="201" y="235" width="1" height="1" fill="#595959"/><rect x="203" y="223" width="1" height="1" fill="#595959"/><rect x="203" y="229" width="1" height="1" fill="#595959"/><rect x="203" y="235" width="1" height="1" fill="#595959"/><rect x="205" y="223" width="1" height="1" fill="#595959"/><rect x="205" y="229" width="1" height="1" fill="#595959"/><rect x="205" y="235" width="1" height="1" fill="#595959"/><rect x="207" y="223" width="1" height="1" fill="#595959"/><rect x="207" y="225" width="1" height="1" fill="#595959"/><rect x="207" y="227" width="1" height="1" fill="#595959"/><rect x="207" y="229" width="1" height="1" fill="#595959"/><rect x="207" y="231" width="1" height="1" fill="#595959"/><rect x="207" y="233" width="1" height="1" fill="#595959"/><rect x="207" y="235" width="1" height="1" fill="#595959"/><path d="M195.5 247.5 h12 v12 h-12 Z M201.5 247 v13 M195 253.5 h13" fill="none" stroke="#595959" stroke-width="1"/><rect x="201" y="273" width="1" height="1" fill="#595959"/><rect x="197" y="277" width="1" height="1" fill="#595959"/><rect x="201" y="275" width="1" height="1" fill="#595959"/><rect x="199" y="277" width="1" height="1" fill="#595959"/><rect x="201" y="277" width="1" height="1" fill="#595959"/><rect x="201" y="277" width="1" height="1" fill="#595959"/><rect x="201" y="279" width="1" height="1" fill="#595959"/><rect x="203" y="277" width="1" height="1" fill="#595959"/><rect x="201" y="281" width="1" height="1" fill="#595959"/><rect x="205" y="277" width="1" height="1" fill="#595959"/><path d="M195.5 271.5 h12 v12 h-12 Z" fill="none" stroke="#595959" stroke-width="1"/><rect x="201" y="297" width="1" height="1" fill="#595959"/><rect x="197" y="301" width="1" height="1" fill="#595959"/><rect x="201" y="299" width="1" height="1" fill="#595959"/><rect x="199" y="301" width="1" height="1" fill="#595959"/><rect x="201" y="301" width="1" height="1" fill="#595959"/><rect x="201" y="301" width="1" height="1" fill="#595959"/><rect x="201" y="303" width="1" height="1" fill="#595959"/><rect x="203" y="301" width="1" height="1" fill="#595959"/><rect x="201" y="305" width="1" height="1" fill="#595959"/><rect x="205" y="301" width="1" height="1" fill="#595959"/><path d="M195 295 h13 v13 h-13 Z" fill="none" stroke="#595959" stroke-width="2"/><rect x="195" y="321" width="1" height="1" fill="#595959"/><rect x="195" y="323" width="1" height="1" fill="#595959"/><rect x="195" y="325" width="1" height="1" fill="#595959"/><rect x="195" y="327" width="1" height="1" fill="#595959"/><rect x="195" y="329" width="1" height="1" fill="#595959"/><rect x="197" y="321" width="1" height="1" fill="#595959"/><rect x="197" y="327" width="1" height="1" fill="#595959"/><rect x="199" y="321" width="1" height="1" fill="#595959"/><rect x="199" y="327" width="1" height="1" fill="#595959"/><rect x="201" y="321" width="1" height="1" fill="#595959"/><rect x="201" y="323" width="1" height="1" fill="#595959"/><rect x="201" y="325" width="1" height="1" fill="#595959"/><rect x="201" y="327" width="1" height="1" fill="#595959"/><rect x="201" y="329" width="1" height="1" fill="#595959"/><rect x="203" y="321" width="1" height="1" fill="#595959"/><rect x="203" y="327" width="1" height="1" fill="#595959"/><rect x="205" y="321" width="1" height="1" fill="#595959"/><rect x="205" y="327" width="1" height="1" fill="#595959"/><rect x="207" y="321" width="1" height="1" fill="#595959"/><rect x="207" y="323" width="1" height="1" fill="#595959"/><rect x="207" y="325" width="1" height="1" fill="#595959"/><rect x="207" y="327" width="1" height="1" fill="#595959"/><rect x="207" y="329" width="1" height="1" fill="#595959"/><rect x="195" y="331" width="13" height="1" fill="#595959"/><rect x="195" y="333" width="13" height="1" fill="#595959"/><rect x="195" y="345" width="1" height="1" fill="#595959"/><rect x="195" y="347" width="1" height="1" fill="#595959"/><rect x="195" y="349" width="1" height="1" fill="#595959"/><rect x="195" y="351" width="1" height="1" fill="#595959"/><rect x="195" y="353" width="1" height="1" fill="#595959"/><rect x="195" y="355" width="1" height="1" fill="#595959"/><rect x="197" y="345" width="1" height="1" fill="#595959"/><rect x="197" y="351" width="1" height="1" fill="#595959"/><rect x="199" y="345" width="1" height="1" fill="#595959"/><rect x="199" y="351" width="1" height="1" fill="#595959"/><rect x="201" y="345" width="1" height="1" fill="#595959"/><rect x="201" y="347" width="1" height="1" fill="#595959"/><rect x="201" y="349" width="1" height="1" fill="#595959"/><rect x="201" y="351" width="1" height="1" fill="#595959"/><rect x="201" y="353" width="1" height="1" fill="#595959"/><rect x="201" y="355" width="1" height="1" fill="#595959"/><rect x="203" y="345" width="1" height="1" fill="#595959"/><rect x="203" y="351" width="1" height="1" fill="#595959"/><rect x="205" y="345" width="1" height="1" fill="#595959"/><rect x="205" y="351" width="1" height="1" fill="#595959"/><rect x="207" y="345" width="1" height="1" fill="#595959"/><rect x="207" y="347" width="1" height="1" fill="#595959"/><rect x="207" y="349" width="1" height="1" fill="#595959"/><rect x="207" y="351" width="1" height="1" fill="#595959"/><rect x="207" y="353" width="1" height="1" fill="#595959"/><rect x="207" y="355" width="1" height="1" fill="#595959"/><rect x="195" y="357" width="13" height="2" fill="#595959"/><rect x="195" y="371" width="1" height="1" fill="#595959"/><rect x="195" y="373" width="1" height="1" fill="#595959"/><rect x="195" y="375" width="1" height="1" fill="#595959"/><rect x="195" y="377" width="1" height="1" fill="#595959"/><rect x="195" y="379" width="1" height="1" fill="#595959"/><rect x="197" y="375" width="1" height="1" fill="#595959"/><rect x="199" y="375" width="1" height="1" fill="#595959"/><rect x="201" y="371" width="1" height="1" fill="#595959"/><rect x="201" y="373" width="1" height="1" fill="#595959"/><rect x="201" y="375" width="1" height="1" fill="#595959"/><rect x="201" y="377" width="1" height="1" fill="#595959"/><rect x="201" y="379" width="1" height="1" fill="#595959"/><rect x="203" y="375" width="1" height="1" fill="#595959"/><rect x="205" y="375" width="1" height="1" fill="#595959"/><rect x="207" y="371" width="1" height="1" fill="#595959"/><rect x="207" y="373" width="1" height="1" fill="#595959"/><rect x="207" y="375" width="1" height="1" fill="#595959"/><rect x="207" y="377" width="1" height="1" fill="#595959"/><rect x="207" y="379" width="1" height="1" fill="#595959"/><rect x="195" y="368" width="13" height="2" fill="#595959"/><rect x="195" y="381" width="13" height="2" fill="#595959"/><rect x="195" y="395" width="1" height="1" fill="#595959"/><rect x="195" y="397" width="1" height="1" fill="#595959"/><rect x="195" y="399" width="1" height="1" fill="#595959"/><rect x="195" y="401" width="1" height="1" fill="#595959"/><rect x="195" y="403" width="1" height="1" fill="#595959"/><rect x="197" y="399" width="1" height="1" fill="#595959"/><rect x="199" y="399" width="1" height="1" fill="#595959"/><rect x="201" y="395" width="1" height="1" fill="#595959"/><rect x="201" y="397" width="1" height="1" fill="#595959"/><rect x="201" y="399" width="1" height="1" fill="#595959"/><rect x="201" y="401" width="1" height="1" fill="#595959"/><rect x="201" y="403" width="1" height="1" fill="#595959"/><rect x="203" y="399" width="1" height="1" fill="#595959"/><rect x="205" y="399" width="1" height="1" fill="#595959"/><rect x="207" y="395" width="1" height="1" fill="#595959"/><rect x="207" y="397" width="1" height="1" fill="#595959"/><rect x="207" y="399" width="1" height="1" fill="#595959"/><rect x="207" y="401" width="1" height="1" fill="#595959"/><rect x="207" y="403" width="1" height="1" fill="#595959"/><rect x="195" y="393" width="13" height="1" fill="#595959"/><rect x="195" y="405" width="13" height="2" fill="#595959"/><rect x="195" y="419" width="1" height="1" fill="#595959"/><rect x="195" y="421" width="1" height="1" fill="#595959"/><rect x="195" y="423" width="1" height="1" fill="#595959"/><rect x="195" y="425" width="1" height="1" fill="#595959"/><rect x="197" y="423" width="1" height="1" fill="#595959"/><rect x="199" y="423" width="1" height="1" fill="#595959"/><rect x="201" y="419" width="1" height="1" fill="#595959"/><rect x="201" y="421" width="1" height="1" fill="#595959"/><rect x="201" y="423" width="1" height="1" fill="#595959"/><rect x="201" y="425" width="1" height="1" fill="#595959"/><rect x="203" y="423" width="1" height="1" fill="#595959"/><rect x="205" y="423" width="1" height="1" fill="#595959"/><rect x="207" y="419" width="1" height="1" fill="#595959"/><rect x="207" y="421" width="1" height="1" fill="#595959"/><rect x="207" y="423" width="1" height="1" fill="#595959"/><rect x="207" y="425" width="1" height="1" fill="#595959"/><rect x="195" y="417" width="13" height="1" fill="#595959"/><rect x="195" y="427" width="13" height="1" fill="#595959"/><rect x="195" y="429" width="13" height="1" fill="#595959"/><path d="M195.5 467 V477.5 H207.5 V469" fill="none" stroke="#595959" stroke-width="1.1"/><rect x="195" y="465" width="10" height="2.5" fill="#595959"/><path d="M198.5 467 V477 M196 472.5 H200 M203.5 474 V477" stroke="#999" stroke-width="1"/><path d="M201.5 472 L209.5 464" stroke="#fff" stroke-width="5" stroke-linecap="round"/><polygon points="200.5,473 203.9,471.8 201.7,469.6" fill="#3f7cc4"/><path d="M203.4 470.1 L207.3 466.2" stroke="#3f7cc4" stroke-width="3.2" stroke-linecap="butt"/><path d="M208.5 465.0 L209.5 464" stroke="#3f7cc4" stroke-width="3.2" stroke-linecap="round"/><path d="M199 500.5 H195.5 V488.5 H207.5 V492" fill="none" stroke="#595959" stroke-width="1.1"/><path d="M201.5 489 V497 M196 494.5 H204.5" stroke="#999" stroke-width="1"/><path d="M200.5 502 L209.5 493.5" stroke="#fff" stroke-width="5" stroke-linecap="round"/><polygon points="199.5,503 202.9,501.8 200.7,499.6" fill="#3f7cc4"/><path d="M202.4 500.1 L207.3 495.7" stroke="#3f7cc4" stroke-width="3.2" stroke-linecap="butt"/><path d="M208.5 494.5 L209.5 493.5" stroke="#3f7cc4" stroke-width="3.2" stroke-linecap="round"/><polygon points="208.33,516.18 203.52,511.37 194.47,520.42 199.28,525.23" fill="#e8899b"/><path d="M196.59 518.02 L201.68 523.11" stroke="#fff" stroke-width="1.1"/><path d="M200 545.5 H194.5 V535.5 H204.5" fill="none" stroke="#595959" stroke-width="1.1"/><path d="M201 545 L208.5 537.5" stroke="#fff" stroke-width="5" stroke-linecap="round"/><polygon points="200,546 203.4,544.8 201.2,542.6" fill="#3f7cc4"/><path d="M202.9 543.1 L206.3 539.7" stroke="#3f7cc4" stroke-width="3.2" stroke-linecap="butt"/><path d="M207.5 538.5 L208.5 537.5" stroke="#3f7cc4" stroke-width="3.2" stroke-linecap="round"/><rect x="194" y="547" width="16" height="4" fill="#000"/><path d="M195.5 586.5 h12 v12 h-12 Z M201.5 586 v13 M195 592.5 h13" fill="#fff" stroke="#595959" stroke-width="1"/></svg>
<svg class="a" style="left:0;top:0" width="642" height="607"><rect x="185" y="71" width="40" height="25" rx="6" fill="none" stroke="#e81123" stroke-width="4.5"/><rect x="188.4" y="581" width="272.1" height="20.5" rx="8" fill="none" stroke="#e81123" stroke-width="4.5"/></svg>
</body></html>
